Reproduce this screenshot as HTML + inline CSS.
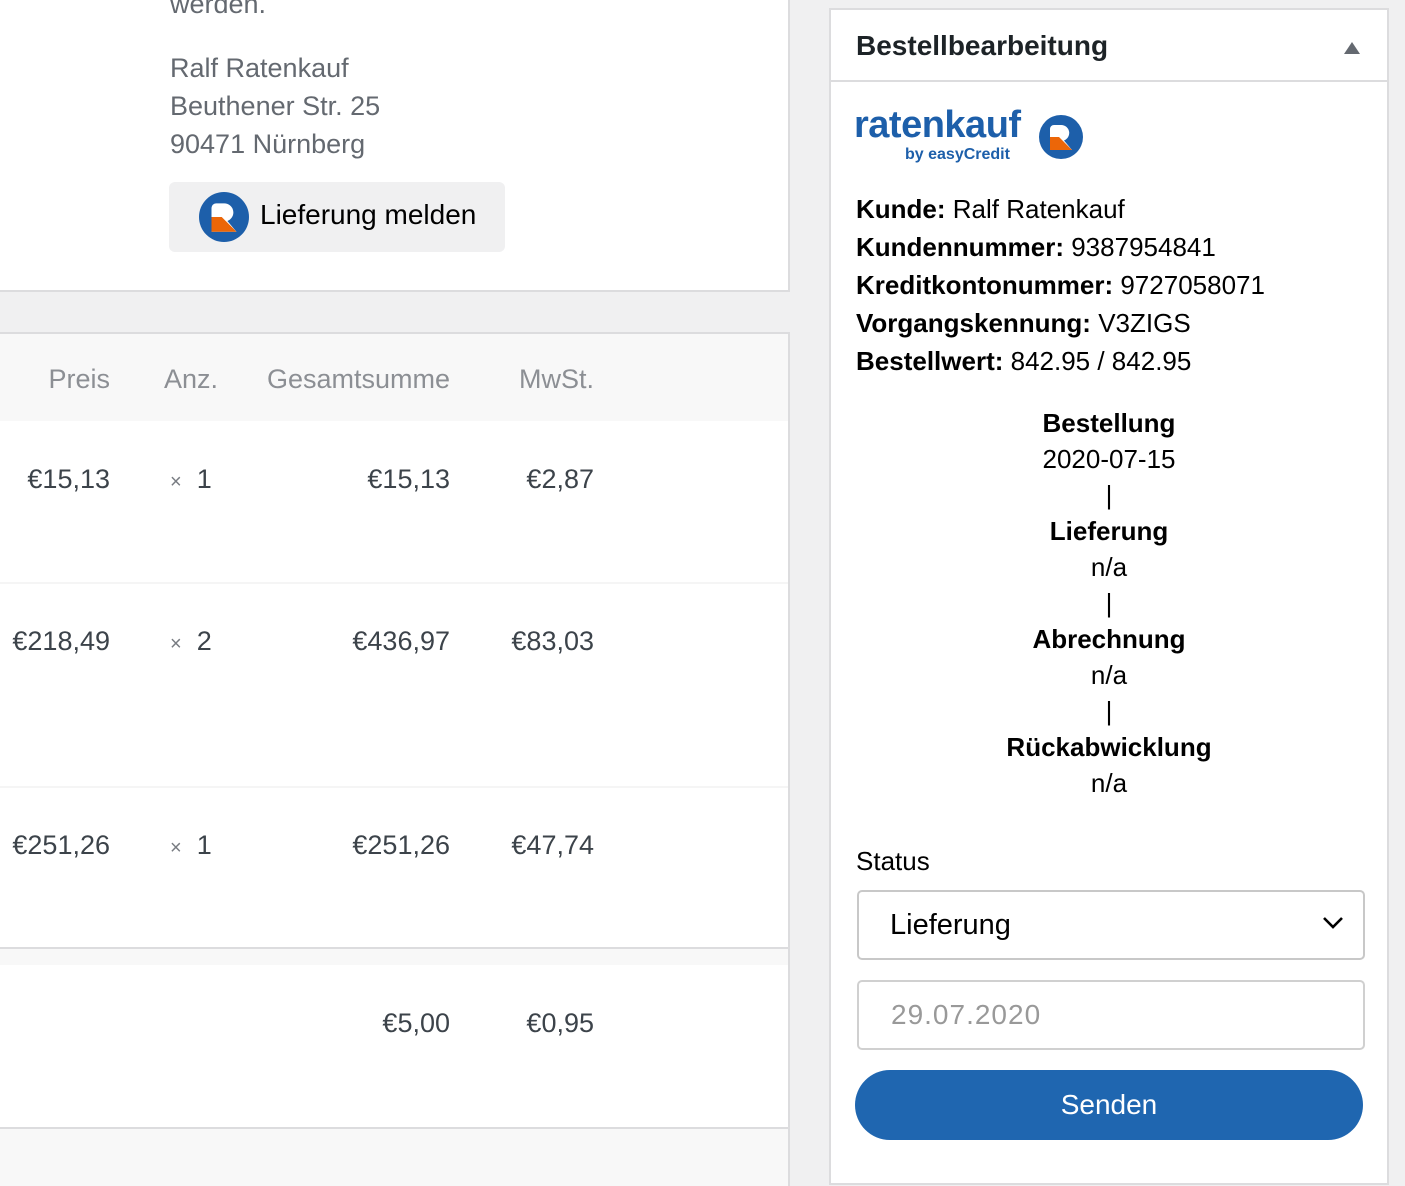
<!DOCTYPE html>
<html><head><meta charset="utf-8"><style>
*{margin:0;padding:0;box-sizing:border-box}
html{width:1405px;height:1186px;overflow:hidden}
body{width:1405px;height:1186px;background:#f0f0f1;font-family:"Liberation Sans",Arial,sans-serif;position:relative;overflow:hidden;font-size:27px}
.a{position:absolute;white-space:nowrap}
.r{text-align:right}
.gr{color:#646970}
.dk{color:#3c434a}
.hd{color:#8c8f94}
.x{font-size:20px;color:#787c82}
.rp b{font-weight:bold}
.c{width:558px;left:830px;text-align:center;color:#000}
</style></head><body>
<div class="a" style="left:0;top:-2px;width:790px;height:294px;background:#fff;border-right:2px solid #dcdcde;border-bottom:2px solid #dcdcde"></div>
<div class="a gr" style="left:170px;top:-15px;line-height:38px">werden.</div>
<div class="a gr" style="left:170px;top:49px;line-height:38px">Ralf Ratenkauf<br>Beuthener Str. 25<br>90471 Nürnberg</div>
<div class="a" style="left:169px;top:182px;width:336px;height:70px;background:#f0f0f1;border-radius:6px"></div>
<svg class="a" style="left:199px;top:192px" width="50" height="50" viewBox="0 0 44 44"><circle cx="22" cy="22" r="22" fill="#1d5faa"/><path d="M15 10h7a8 8 0 0 1 3 15.5L33 35H11V14a4 4 0 0 1 4-4Z" fill="#fff"/><path d="M11 22h9l13 13H11Z" fill="#ec6608"/></svg>
<div class="a" style="left:260px;top:199px;color:#000;font-size:28px">Lieferung melden</div>
<div class="a" style="left:0;top:332px;width:790px;height:860px;background:#fff;border-right:2px solid #dcdcde;border-top:2px solid #dcdcde"></div>
<div class="a" style="left:0;top:334px;width:788px;height:87px;background:#f8f8f8"></div>
<div class="a" style="left:0;top:582px;width:788px;height:2px;background:#f5f5f5"></div>
<div class="a" style="left:0;top:786px;width:788px;height:2px;background:#f5f5f5"></div>
<div class="a" style="left:0;top:947px;width:788px;height:2px;background:#dcdcde"></div>
<div class="a" style="left:0;top:949px;width:788px;height:16px;background:#f8f8f8"></div>
<div class="a" style="left:0;top:1127px;width:788px;height:2px;background:#dcdcde"></div>
<div class="a" style="left:0;top:1129px;width:788px;height:60px;background:#f8f8f8"></div>
<div class="a hd r" style="left:0;width:110px;top:364px">Preis</div>
<div class="a hd" style="left:164px;top:364px">Anz.</div>
<div class="a hd r" style="left:200px;width:250px;top:364px">Gesamtsumme</div>
<div class="a hd r" style="left:450px;width:144px;top:364px">MwSt.</div>
<div class="a dk r" style="left:0;width:110px;top:464px">€15,13</div>
<div class="a dk" style="left:170px;top:464px"><span class="x">×</span>&nbsp; 1</div>
<div class="a dk r" style="left:200px;width:250px;top:464px">€15,13</div>
<div class="a dk r" style="left:450px;width:144px;top:464px">€2,87</div>
<div class="a dk r" style="left:0;width:110px;top:626px">€218,49</div>
<div class="a dk" style="left:170px;top:626px"><span class="x">×</span>&nbsp; 2</div>
<div class="a dk r" style="left:200px;width:250px;top:626px">€436,97</div>
<div class="a dk r" style="left:450px;width:144px;top:626px">€83,03</div>
<div class="a dk r" style="left:0;width:110px;top:830px">€251,26</div>
<div class="a dk" style="left:170px;top:830px"><span class="x">×</span>&nbsp; 1</div>
<div class="a dk r" style="left:200px;width:250px;top:830px">€251,26</div>
<div class="a dk r" style="left:450px;width:144px;top:830px">€47,74</div>
<div class="a dk r" style="left:200px;width:250px;top:1008px">€5,00</div>
<div class="a dk r" style="left:450px;width:144px;top:1008px">€0,95</div>
<div class="a" style="left:829px;top:8px;width:560px;height:1177px;background:#fff;border:2px solid #dcdcde"></div>
<div class="a" style="left:831px;top:80px;width:556px;height:2px;background:#dcdcde"></div>
<div class="a" style="left:856px;top:30px;font-size:28px;font-weight:bold;color:#1d2327">Bestellbearbeitung</div>
<div class="a" style="left:1344px;top:42px;width:0;height:0;border-left:8px solid transparent;border-right:8px solid transparent;border-bottom:12px solid #646970"></div>
<div class="a" style="left:854px;top:104px;font-size:38px;font-weight:bold;color:#1d5faa;letter-spacing:-0.5px">ratenkauf</div>
<div class="a" style="left:905px;top:146px;font-size:16px;font-weight:bold;color:#1d5faa">by easyCredit</div>
<svg class="a" style="left:1039px;top:115px" width="44" height="44" viewBox="0 0 44 44"><circle cx="22" cy="22" r="22" fill="#1d5faa"/><path d="M15 10h7a8 8 0 0 1 3 15.5L33 35H11V14a4 4 0 0 1 4-4Z" fill="#fff"/><path d="M11 22h9l13 13H11Z" fill="#ec6608"/></svg>
<div class="a rp" style="left:856px;top:190px;line-height:38px;color:#000;font-size:26px"><b>Kunde:</b> Ralf Ratenkauf<br><b>Kundennummer:</b> 9387954841<br><b>Kreditkontonummer:</b> 9727058071<br><b>Vorgangskennung:</b> V3ZIGS<br><b>Bestellwert:</b> 842.95 / 842.95</div>
<div class="a c" style="top:405px;line-height:36px;font-size:26px"><b>Bestellung</b><br>2020-07-15<br>|<br><b>Lieferung</b><br>n/a<br>|<br><b>Abrechnung</b><br>n/a<br>|<br><b>Rückabwicklung</b><br>n/a</div>
<div class="a" style="left:856px;top:846px;color:#000;font-size:26px">Status</div>
<div class="a" style="left:857px;top:890px;width:508px;height:70px;border:2px solid #c8c8c8;border-radius:5px;background:#fff"></div>
<div class="a" style="left:890px;top:909px;font-size:29px;color:#000">Lieferung</div>
<svg class="a" style="left:1322px;top:916px" width="22" height="14" viewBox="0 0 22 14"><path d="M2 2l9 9 9-9" fill="none" stroke="#000" stroke-width="2.6"/></svg>
<div class="a" style="left:857px;top:980px;width:508px;height:70px;border:2px solid #d0d0d0;border-radius:5px;background:#fff"></div>
<div class="a" style="left:891px;top:999px;font-size:28px;color:#999;letter-spacing:1px">29.07.2020</div>
<div class="a" style="left:855px;top:1070px;width:508px;height:70px;border-radius:35px;background:#1f66b0;color:#fff;font-size:28px;text-align:center;line-height:70px">Senden</div>
</body></html>
